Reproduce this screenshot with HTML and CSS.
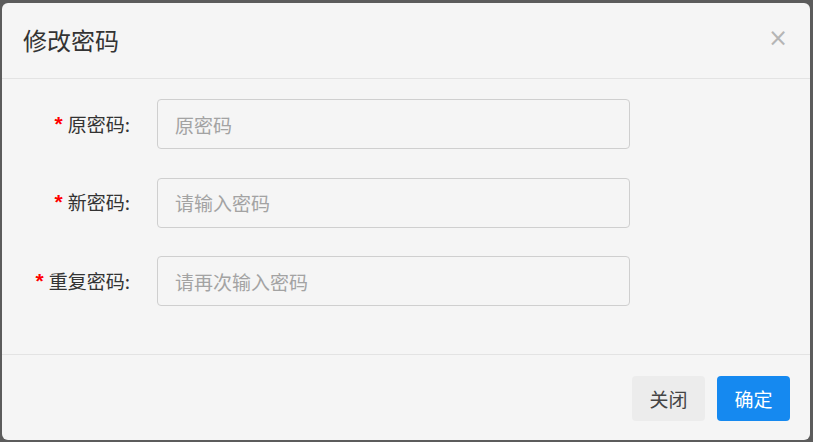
FILE: index.html
```html
<!DOCTYPE html>
<html lang="zh">
<head>
<meta charset="utf-8">
<title>修改密码</title>
<link rel="stylesheet" href="styles.css">
</head>
<body>
<div class="backdrop">
  <div class="dialog">
    <div class="dialog-header">
      <h1 class="dialog-title">修改密码</h1>
      <span class="dialog-close">×</span>
    </div>
    <form class="dialog-body">
      <div class="form-row">
        <label class="form-label"><span class="req">*</span>原密码:</label>
        <input class="form-input" type="password" placeholder="原密码">
      </div>
      <div class="form-row">
        <label class="form-label"><span class="req">*</span>新密码:</label>
        <input class="form-input" type="password" placeholder="请输入密码">
      </div>
      <div class="form-row">
        <label class="form-label"><span class="req">*</span>重复密码:</label>
        <input class="form-input" type="password" placeholder="请再次输入密码">
      </div>
    </form>
    <div class="dialog-footer">
      <button class="btn btn-default" type="button">关闭</button>
      <button class="btn btn-primary" type="button">确定</button>
    </div>
  </div>
</div>
</body>
</html>
```
FILE: styles.css
```css
* { box-sizing: border-box; }
html, body {
  margin: 0;
  padding: 0;
  background: #5c5c5c;
  font-family: "Noto Sans CJK SC", "Noto Sans", sans-serif;
}
.backdrop {
  width: 813px;
  height: 442px;
  padding: 3px 3px 2px 2px;
}
.dialog {
  width: 808px;
  height: 437px;
  background: #f5f5f5;
  border-radius: 6px;
  display: flex;
  flex-direction: column;
}
.dialog-header {
  height: 76px;
  border-bottom: 1px solid #e3e3e3;
  display: flex;
  align-items: center;
  justify-content: space-between;
  padding: 0 22px 0 21px;
}
.dialog-title {
  margin: 0;
  font-size: 24px;
  font-weight: 400;
  color: #333;
  line-height: 1;
  padding-bottom: 2px;
}
.dialog-close {
  font-family: "DejaVu Sans", sans-serif;
  font-size: 24px;
  color: #b5b5b5;
  line-height: 1;
  margin-bottom: 6px;
}
.dialog-body {
  margin: 0;
  padding: 20px 0 48px 0;
  display: flex;
  flex-direction: column;
  gap: 28.5px;
  border-bottom: 1px solid #e3e3e3;
}
.form-row {
  display: flex;
  align-items: center;
}
.form-label {
  width: 128px;
  text-align: right;
  font-size: 19px;
  color: #333;
  margin-right: 27px;
  white-space: nowrap;
  padding-bottom: 2px;
}
.req {
  color: #f00;
  font-weight: 700;
  font-size: 21px;
  font-family: "Liberation Sans", sans-serif;
  margin-right: 5px;
  position: relative;
  top: -1px;
}
.form-input {
  width: 473px;
  height: 50px;
  border: 1px solid #cfcfcf;
  border-radius: 4px;
  background: #f5f5f5;
  padding: 0 17px;
  font-size: 19px;
  font-family: "Noto Sans CJK SC", "Noto Sans", sans-serif;
  color: #333;
  outline: none;
}
.form-input::placeholder {
  color: #a3a3a3;
}
.dialog-footer {
  display: flex;
  justify-content: flex-end;
  gap: 12px;
  padding: 21px 20px 0 0;
}
.btn {
  width: 73px;
  height: 45px;
  border: none;
  border-radius: 4px;
  font-size: 19px;
  font-family: "Noto Sans CJK SC", "Noto Sans", sans-serif;
  padding: 0;
}
.btn-default {
  background: #ececec;
  color: #444;
}
.btn-primary {
  background: #1589f0;
  color: #fff;
}
```
